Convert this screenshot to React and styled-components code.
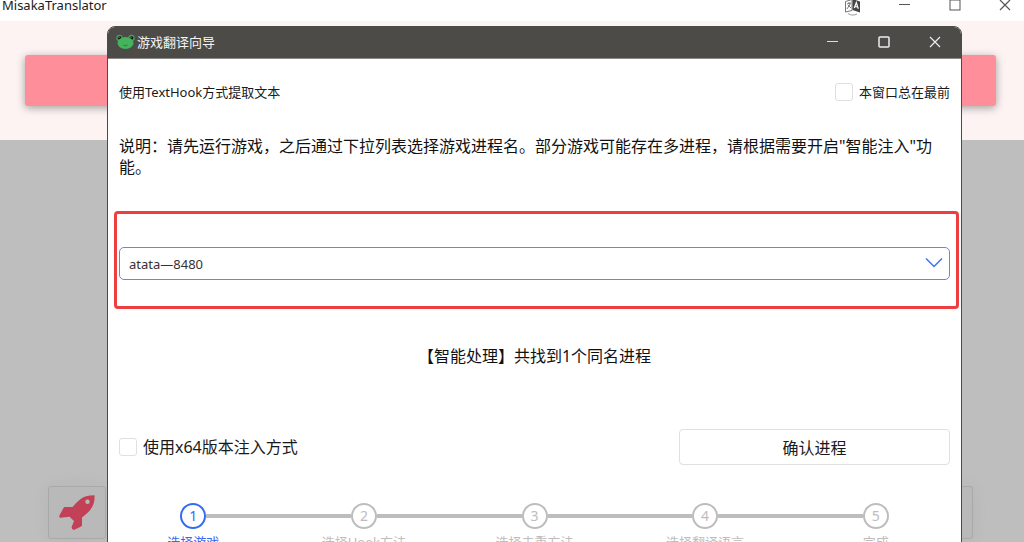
import React from "react";
import styled, { createGlobalStyle } from "styled-components";

const GlobalStyle = createGlobalStyle`
  *, *::before, *::after { box-sizing: border-box; }
  body {
    margin: 0;
    overflow: hidden;
    background: #bebebe;
    color: #1a1a1a;
    font-family: "Noto Sans", "Noto Sans CJK SC", sans-serif;
  }
  button, select, input { font: inherit; color: inherit; }
`;

const Page = styled.div`
  position: relative;
  display: flex;
  flex-direction: column;
  height: 100vh;
  overflow: hidden;
`;

const AppBar = styled.header`
  display: flex;
  align-items: center;
  justify-content: space-between;
  height: 21px;
  flex: none;
  padding: 0 12px 11px 2px;
  background: #fff;
  font-size: 13px;
`;

const Controls = styled.div`
  display: flex;
  align-items: center;
  gap: ${(p) => p.$gap}px;
`;

const IconButton = styled.button`
  display: grid;
  place-items: center;
  width: ${(p) => p.$wide ? 18 : 14}px;
  height: 14px;
  padding: 0;
  border: 0;
  background: none;
  color: ${(p) => p.$color};
  svg { display: block; flex: none; }
`;

const Banner = styled.div`
  flex: none;
  height: 119px;
  padding: 34px 28px 34px 25px;
  background: #fcf3f2;
`;

const BannerCard = styled.div`
  height: 51px;
  border-radius: 3px;
  background: #ff8e9b;
  box-shadow: 0 2px 9px rgba(0, 0, 0, 0.35);
`;

const Dock = styled.footer`
  display: flex;
  justify-content: space-between;
  margin-top: auto;
  padding: 0 51px 3px 48px;
`;

const DockButton = styled.button`
  display: grid;
  place-items: center;
  width: 58px;
  height: 53px;
  padding: 0;
  border: 1px solid #a9a9a9;
  border-radius: 3px;
  background: #b9b9b9;
  box-shadow: 0 0 18px rgba(0, 0, 0, 0.05);
  color: #c34156;
`;

const Dialog = styled.section`
  position: absolute;
  top: 26px;
  left: 107px;
  right: 62px;
  min-height: 540px;
  border: 1px solid #4d4b48;
  border-radius: 8px;
  background: #fff;
  overflow: hidden;
`;

const TitleBar = styled.header`
  display: flex;
  align-items: center;
  justify-content: space-between;
  height: 32px;
  padding: 0 19px 1px 8px;
  background: #4d4b48;
  border-bottom: 1px solid #8a8988;
  color: #f4f4f4;
`;

const Title = styled.h1`
  display: flex;
  align-items: center;
  gap: 2px;
  margin: 0;
  font-size: 13px;
  font-weight: 400;
  line-height: 20px;
`;

const Body = styled.div`
  padding: 22px 11px 0;
`;

const Row = styled.div`
  display: flex;
  align-items: center;
  justify-content: space-between;
`;

const Method = styled.span`
  font-size: 13px;
  line-height: 22px;
`;

const CheckLabel = styled.label`
  display: flex;
  align-items: center;
  gap: 6px;
  font-size: ${(p) => p.$size}px;
  line-height: 22px;
`;

const CheckBox = styled.input`
  appearance: none;
  width: 18px;
  height: 18px;
  margin: 0;
  border: 1px solid #e0e0e0;
  border-radius: 3px;
  background: #fff;
`;

const Note = styled.p`
  margin: 33px 0 0;
  font-size: 16px;
  line-height: 21px;
  color: #111;
`;

const Highlight = styled.div`
  margin: 33px -9px 0 -5px;
  padding: 33px 6px 26px 2px;
  border: 3px solid #ee3e40;
  border-radius: 4px;
`;

const SelectBox = styled.div`
  position: relative;
  svg {
    position: absolute;
    right: 7px;
    top: 10px;
    pointer-events: none;
  }
`;

const Select = styled.select`
  display: block;
  appearance: none;
  width: 100%;
  height: 33px;
  padding: 0 32px 0 9px;
  border: 1px solid #5b8af8;
  border-radius: 5px;
  background: #fff;
  font-size: 13px;
  color: #333;
`;

const Result = styled.p`
  margin: 36px 0 62px;
  text-align: center;
  font-size: 16px;
  line-height: 22px;
  color: #111;
`;

const Confirm = styled.button`
  width: 271px;
  height: 36px;
  padding: 0;
  border: 1px solid #e0e0e0;
  border-radius: 4px;
  background: #fff;
  font-size: 16px;
`;

const Steps = styled.ol`
  display: grid;
  grid-template-columns: repeat(5, 1fr);
  margin: 38px 0 0;
  padding: 0;
  list-style: none;
`;

const Step = styled.li`
  display: flex;
  flex-direction: column;
  align-items: center;
  gap: 3px;
  font-size: 13px;
  line-height: 20px;
  color: ${(p) => (p.$active ? "#326cf3" : "#bdbdbd")};
`;

const Track = styled.div`
  display: flex;
  align-items: center;
  width: 100%;
`;

const Line = styled.span`
  flex: 1;
  height: 4px;
  background: ${(p) => (p.$hidden ? "transparent" : "#bdbdbd")};
`;

const Circle = styled.span`
  display: grid;
  place-items: center;
  width: 26px;
  height: 26px;
  border: 2px solid currentColor;
  border-radius: 50%;
  font-size: 14px;
`;

const Minimize = () => (
  <svg width="12" height="12" viewBox="0 0 12 12" stroke="currentColor"><path d="M0 5.500h11" /></svg>
);
const Maximize = ({ stroke = 1 }) => (
  <svg width="12" height="12" viewBox="0 0 12 12" fill="none" stroke="currentColor" strokeWidth={stroke}>
    <rect x="1" y="1" width="10" height="10" rx={stroke > 1 ? 1 : 0} />
  </svg>
);
const Close = () => (
  <svg width="12" height="12" viewBox="0 0 12 12" stroke="currentColor" strokeWidth="1.2"><path d="M1 1l10 10M11 1L1 11" /></svg>
);

const Translate = () => (
  <svg width="18" height="18" viewBox="0 0 18 18" fill="none">
    <path d="M1.500 3.500L8 1.500v11l-6.500 1.500z" stroke="#777" />
    <path d="M3 6l4-1M5 4v1.500M6.500 5.500L3 11M4 7l3 3" stroke="#777" />
    <path d="M8.500 1l7.500 2.500v11L8.500 12z" fill="#444" />
    <path d="M10.300 10l2-5.500 2 6.300M11 8.500l2.500.5" stroke="#fff" strokeWidth="1.200" />
    <path d="M4 15.500c3 2 6 2 9 .5" stroke="#999" />
  </svg>
);

const Frog = () => (
  <svg width="19" height="16" viewBox="0 0 19 16">
    <circle cx="3.500" cy="4" r="3.200" fill="#3da653" />
    <circle cx="15.500" cy="4" r="3.200" fill="#3da653" />
    <circle cx="3.500" cy="3.800" r="1.900" fill="#161616" />
    <circle cx="15.500" cy="3.800" r="1.900" fill="#161616" />
    <circle cx="3" cy="3" r=".6" fill="#ddd" />
    <circle cx="15" cy="3" r=".6" fill="#ddd" />
    <ellipse cx="9.500" cy="9" rx="8" ry="6" fill="#46b25c" />
    <path d="M7.500 11q2 1.500 4 0" fill="none" stroke="#267a39" />
  </svg>
);

const Rocket = () => (
  <svg width="36" height="36" viewBox="0 0 36 36" fill="currentColor">
    <path fillRule="evenodd" d="M35.500.3C29 .3 24.500 1.500 21 4.500C18 7 15.500 9.500 13.500 12H6Q5 12 4.500 13L.4 20.500Q-.2 22.500 1.500 22.800L10.500 21.800L15 26L12.600 32Q12.500 34.500 15 35L22 31.500Q23 31 23 30V22.500C27 19.500 30.500 16.500 32.800 12.500C35 9 35.800 5 35.500.3zM28.500 4.500a2.200 2.200 0 1 1 0 4.400 2.200 2.200 0 0 1 0-4.400z" />
  </svg>
);

const steps = ["选择游戏", "选择Hook方法", "选择去重方法", "选择翻译语言", "完成"];

export default function App() {
  return (
    <Page>
      <GlobalStyle />
      <AppBar>
        <span>MisakaTranslator</span>
        <Controls $gap={36}>
          <IconButton $wide $color="#444" aria-label="语言"><Translate /></IconButton>
          <IconButton $color="#555" aria-label="最小化"><Minimize /></IconButton>
          <IconButton $color="#555" aria-label="最大化"><Maximize /></IconButton>
          <IconButton $color="#555" aria-label="关闭"><Close /></IconButton>
        </Controls>
      </AppBar>
      <Banner><BannerCard /></Banner>
      <Dock>
        <DockButton aria-label="启动"><Rocket /></DockButton>
        <DockButton aria-label="更多" />
      </Dock>

      <Dialog aria-label="游戏翻译向导">
        <TitleBar>
          <Title><Frog />游戏翻译向导</Title>
          <Controls $gap={37}>
            <IconButton $color="#ddd" aria-label="最小化"><Minimize /></IconButton>
            <IconButton $color="#eee" aria-label="最大化"><Maximize stroke={1.5} /></IconButton>
            <IconButton $color="#eee" aria-label="关闭"><Close /></IconButton>
          </Controls>
        </TitleBar>
        <Body>
          <Row>
            <Method>使用TextHook方式提取文本</Method>
            <CheckLabel $size={13}><CheckBox type="checkbox" />本窗口总在最前</CheckLabel>
          </Row>
          <Note>说明：请先运行游戏，之后通过下拉列表选择游戏进程名。部分游戏可能存在多进程，请根据需要开启"智能注入"功能。</Note>
          <Highlight>
            <SelectBox>
              <Select aria-label="游戏进程"><option>atata—8480</option></Select>
              <svg width="18" height="12" viewBox="0 0 18 12" fill="none" stroke="#3f73f4" strokeWidth="1.500"><path d="M1 1.500l8 8 8-8" /></svg>
            </SelectBox>
          </Highlight>
          <Result>【智能处理】共找到1个同名进程</Result>
          <Row>
            <CheckLabel $size={16}><CheckBox type="checkbox" />使用x64版本注入方式</CheckLabel>
            <Confirm>确认进程</Confirm>
          </Row>
        </Body>
        <Steps>
          {steps.map((name, i) => (
            <Step key={name} $active={i === 0}>
              <Track>
                <Line $hidden={i === 0} />
                <Circle>{i + 1}</Circle>
                <Line $hidden={i === steps.length - 1} />
              </Track>
              {name}
            </Step>
          ))}
        </Steps>
      </Dialog>
    </Page>
  );
}
